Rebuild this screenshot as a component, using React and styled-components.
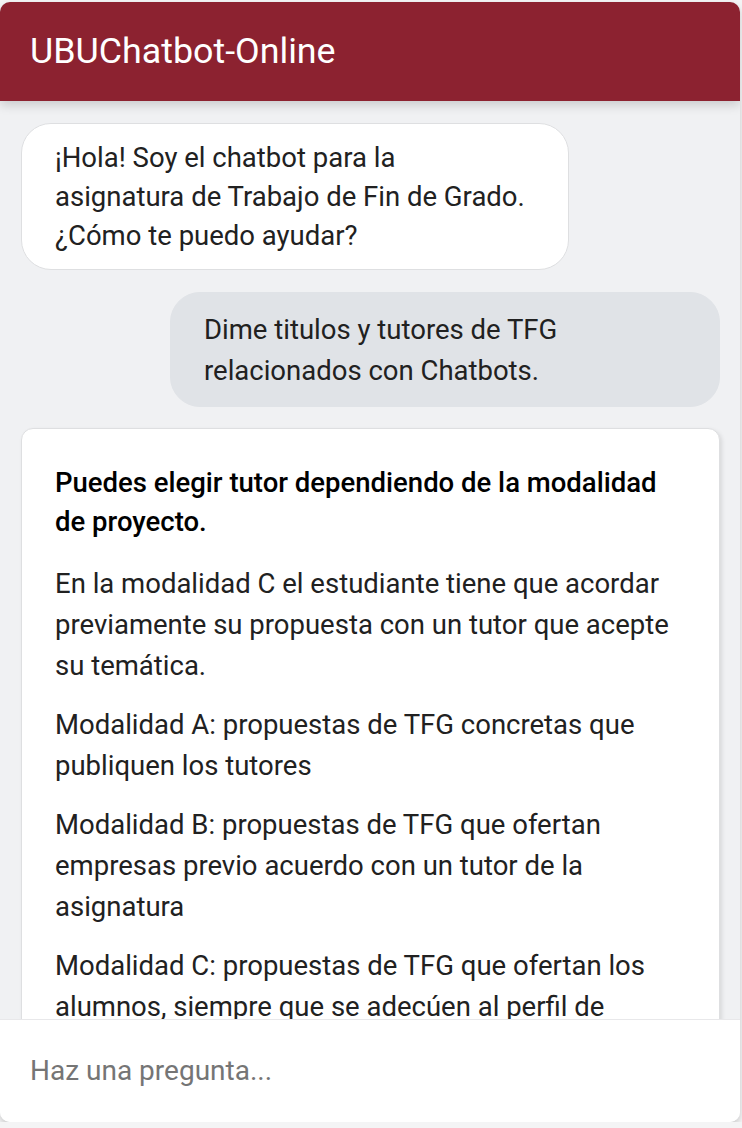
import React from 'react';
import styled, { createGlobalStyle } from 'styled-components';

const GlobalStyle = createGlobalStyle`
    html, body {
        margin: 0;
        padding: 0;
        background: #f4f4f5;
    }
    body {
        font-family: Roboto, "Liberation Sans", sans-serif;
    }
`;

// nbsp keeps "asignatura de" together, as the reference wraps it
const messages = [
    { from: 'bot', text: '¡Hola! Soy el chatbot para la asignatura\u00A0de Trabajo de Fin de Grado. ¿Cómo te puedo ayudar?' },
    { from: 'user', text: 'Dime titulos y tutores de TFG relacionados con Chatbots.' },
];

const answer = {
    title: 'Puedes elegir tutor dependiendo de la modalidad de proyecto.',
    paragraphs: [
        'En la modalidad C el estudiante tiene que acordar previamente su propuesta con un tutor que acepte su temática.',
        'Modalidad A: propuestas de TFG concretas que publiquen los tutores',
        'Modalidad B: propuestas de TFG que ofertan empresas previo acuerdo con un tutor de la asignatura',
        'Modalidad C: propuestas de TFG que ofertan los alumnos, siempre que se adecúen al perfil de conocimientos y competencias del grado.',
    ],
};

const App = () => {
    return (
        <>
            <GlobalStyle />
            <Widget>
                <Header>UBUChatbot-Online</Header>

                <Messages>
                    {messages.map((m, i) => (
                        <Bubble key={i} $user={m.from === 'user'}>
                            {m.text}
                        </Bubble>
                    ))}

                    <Card>
                        <CardTitle>{answer.title}</CardTitle>
                        {answer.paragraphs.map((p, i) => (
                            <Paragraph key={i}>{p}</Paragraph>
                        ))}
                    </Card>
                </Messages>

                <InputBar>
                    <Input placeholder="Haz una pregunta..." />
                </InputBar>
            </Widget>
        </>
    );
};

export default App;

const Widget = styled.div`
    width: 740px;
    height: 1120px;
    margin-top: 2px;
    display: flex;
    flex-direction: column;
    border-radius: 10px;
    overflow: hidden;
    background: #f0f1f3;
    box-shadow: 0 3px 6px rgba(0, 0, 0, 0.18);
`;

const Header = styled.div`
    position: relative;
    z-index: 1;
    flex: 0 0 99px;
    display: flex;
    align-items: center;
    padding: 0 0 2px 30px;
    box-sizing: border-box;
    background: #8c2230;
    color: #fff;
    font-size: 35.8px;
    box-shadow: 0 4px 10px rgba(0, 0, 0, 0.16);
`;

const Messages = styled.div`
    flex: 1;
    display: flex;
    flex-direction: column;
    gap: 21px;
    padding: 22px 20px 0 21px;
    overflow: hidden;
    color: #212121;
    font-size: 27.5px;
    line-height: 40px;
`;

const Bubble = styled.div`
    box-sizing: border-box;
    width: ${p => (p.$user ? '550px' : '548px')};
    align-self: ${p => (p.$user ? 'flex-end' : 'flex-start')};
    margin-top: ${p => (p.$user ? '1px' : '0')};
    padding: ${p => (p.$user ? '16px 28px 15px 33px' : '14px 30px 14px 33px')};
    line-height: ${p => (p.$user ? '41px' : '39px')};
    border-radius: 30px;
    background: ${p => (p.$user ? '#e0e3e7' : '#fff')};
    border: 1px solid ${p => (p.$user ? '#e0e3e7' : '#dedfe1')};
`;

const Card = styled.div`
    flex-shrink: 0;
    padding: 14px 30px 0 33px;
    border-radius: 12px;
    background: #fff;
    border: 1px solid #dedfe1;
    box-shadow: 2px 2px 4px rgba(0, 0, 0, 0.1);
`;

const CardTitle = styled.p`
    margin: 20px 0 22px;
    font-weight: 500;
    color: #000;
    line-height: 39px;
`;

const Paragraph = styled.p`
    margin: 0 0 18px;
    line-height: 41px;
`;

const InputBar = styled.div`
    position: relative;
    z-index: 1;
    flex: 0 0 102px;
    display: flex;
    align-items: center;
    background: #fff;
    border-top: 1px solid #e8e8ea;
`;

const Input = styled.input`
    width: 100%;
    border: none;
    outline: none;
    background: transparent;
    padding: 0 30px 2px;
    font-family: Roboto, "Liberation Sans", sans-serif;
    font-size: 28px;
    color: #333;

    ::placeholder {
        color: #767676;
    }
`;
